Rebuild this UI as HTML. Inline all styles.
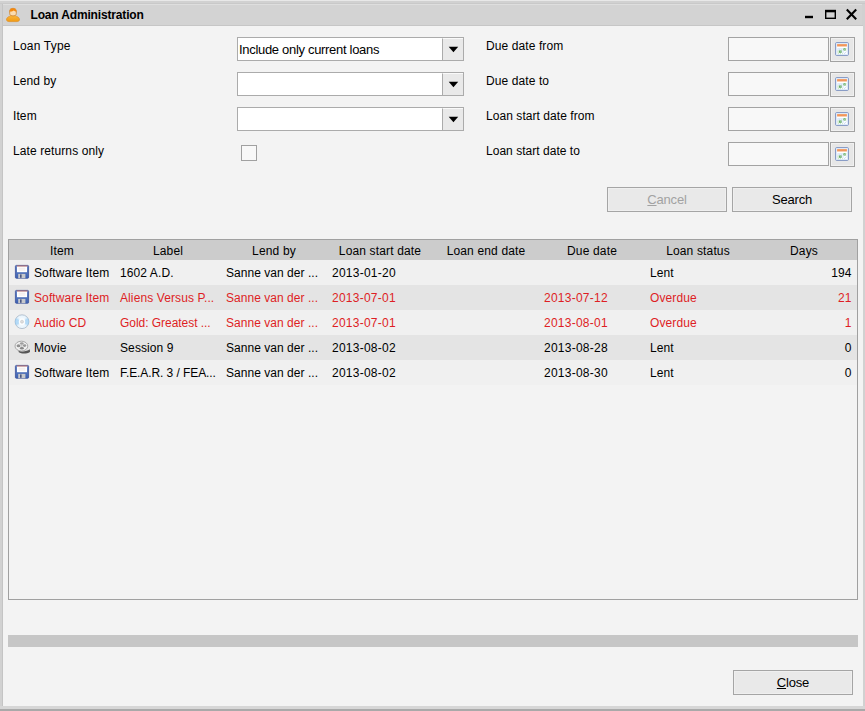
<!DOCTYPE html>
<html><head><meta charset="utf-8"><title>Loan Administration</title>
<style>
html,body{margin:0;padding:0;}
body{width:865px;height:711px;overflow:hidden;background:#d1d1d1;font-family:"Liberation Sans",Arial,sans-serif;font-size:12px;color:#000;position:relative;}
.abs{position:absolute;}
#topline{left:0;top:0;width:865px;height:1px;background:#e8e8e8;}
#topline2{left:0;top:3px;width:865px;height:1px;background:#c9c9c9;}
#botline{left:0;top:709px;width:865px;height:2px;background:#a9a9a9;}
#botline2{left:0;top:706px;width:865px;height:3px;background:#d6d6d6;}
#title{left:3px;top:4px;width:859px;height:21px;background:#d3d3d3;border-top:1px solid #dedede;box-sizing:border-box;}
#titleln{left:3px;top:25px;width:860px;height:1px;background:#c6c6c6;}
#ttext{left:30.5px;top:8px;font-weight:bold;font-size:12px;line-height:14px;white-space:nowrap;letter-spacing:-0.16px;}
#content{left:3px;top:26px;width:860px;height:680px;background:#f3f3f3;}
.lbl{position:absolute;white-space:nowrap;line-height:14px;letter-spacing:0.1px;}
.combo{position:absolute;left:237px;width:225px;height:22px;border:1px solid #ababab;background:#fff;}
.combo .txt{position:absolute;left:1px;top:4px;font-size:13px;line-height:15px;white-space:nowrap;letter-spacing:-0.31px;}
.combo .btn{position:absolute;right:0;top:0;width:20px;height:21px;border-left:1px solid #ababab;border-top:1px solid #fafafa;background:#e9e9e9;}
.combo .btn svg{position:absolute;left:0;top:-1px;}
.date{position:absolute;left:728px;width:99px;height:22px;border:1px solid #a3a3a3;background:#f8f8f8;}
.cal{position:absolute;left:830px;width:23px;height:23px;border:1px solid #a2a2a2;background:#e7e7e7;box-shadow:inset 0 0 0 1px #f1f1f1;}
.cal svg{position:absolute;left:3px;top:3px;}
.chk{position:absolute;left:241px;top:145px;width:14px;height:14px;border:1px solid #a0a0a0;background:#f8f8f8;}
.button{position:absolute;height:23px;border:1px solid #a5a5a5;background:#e9e9e9;text-align:center;line-height:24px;font-size:13px;letter-spacing:-0.2px;box-shadow:inset 0 0 0 1px #efefef;}
#tbl{left:8px;top:239px;width:848px;height:359px;border:1px solid #a0a0a0;background:#f3f3f3;}
#hdr{left:9px;top:240px;width:848px;height:20px;background:#cccccc;}
.h{position:absolute;top:4px;line-height:15px;font-size:12px;text-align:center;white-space:nowrap;letter-spacing:0.15px;}
.row{position:absolute;left:9px;width:848px;height:25px;}
.row.a{background:#f0f0f0;}
.row.b{background:#e4e4e4;}
.row.r{color:#de1e24;}
.c{position:absolute;top:6px;line-height:15px;white-space:nowrap;letter-spacing:0.1px;}
.c.d{letter-spacing:0.25px;}
.ic{position:absolute;left:5px;top:4px;width:16px;height:16px;}
#prog{left:8px;top:635px;width:850px;height:12px;background:#c6c6c6;}
</style></head><body>
<div class="abs" id="topline"></div><div class="abs" id="topline2"></div>
<div class="abs" id="botline2"></div><div class="abs" id="botline"></div>
<div class="abs" id="title"></div><div class="abs" id="titleln"></div>
<div class="abs" style="left:2px;top:4px;width:1px;height:702px;background:#c4c4c4"></div>
<div class="abs" id="content"></div>
<svg class="abs" style="left:5px;top:7px" width="16" height="16" viewBox="0 0 16 16">
 <defs><linearGradient id="ub" x1="0" y1="0" x2="0" y2="1"><stop offset="0" stop-color="#fbb940"/><stop offset="1" stop-color="#f19a12"/></linearGradient></defs>
 <path d="M1.6 13.1 C1.2 11.4 2.6 10 4.4 9.4 C5.4 9 5.8 8.6 6 8 L10 8 C10.2 8.6 10.6 9 11.6 9.4 C13.4 10 14.8 11.4 14.4 13.1 C14.2 14.1 13.2 14.5 12 14.6 L4 14.6 C2.8 14.5 1.8 14.1 1.6 13.1 Z" fill="url(#ub)" stroke="#e0922a" stroke-width="0.8"/>
 <path d="M4.7 3.6 C4.7 0.6 11.3 0.6 11.3 3.6 L11.3 6.6 C11.3 8 9.8 8.9 8 8.9 C6.2 8.9 4.7 8 4.7 6.6 Z" fill="#fbdcb0" stroke="#c8802c" stroke-width="0.8"/>
 <path d="M4.6 4.8 C4.2 0.2 11.8 0.2 11.4 4.8 C10.4 4.6 9.4 4.2 8.8 3.6 C7.8 4.4 6.2 4.8 4.6 4.8Z" fill="#f3880e"/>
</svg>
<span class="abs" id="ttext">Loan Administration</span>
<svg class="abs" style="left:800px;top:4px" width="62" height="21" viewBox="0 0 62 21">
 <rect x="5" y="11.8" width="8" height="2.4" fill="#000"/>
 <rect x="25.7" y="7" width="9.6" height="7.3" fill="none" stroke="#000" stroke-width="1.4"/>
 <rect x="25" y="5.8" width="11" height="2.5" fill="#000"/>
 <path d="M46.8 5.6 L56.2 15.2 M56.2 5.6 L46.8 15.2" stroke="#000" stroke-width="2.1"/>
</svg>

<span class="lbl" style="left:13px;top:39px;letter-spacing:0.21px">Loan Type</span>
<span class="lbl" style="left:13px;top:74px">Lend by</span>
<span class="lbl" style="left:13px;top:109px">Item</span>
<span class="lbl" style="left:13px;top:144px">Late returns only</span>

<div class="combo" style="top:37px"><span class="txt">Include only current loans</span><div class="btn"><svg width="20" height="22" viewBox="0 0 20 22"><path d="M5.7 8.8 L15.2 8.8 L10.45 14.2 Z" fill="#000"/></svg></div></div>
<div class="combo" style="top:72px"><div class="btn"><svg width="20" height="22" viewBox="0 0 20 22"><path d="M5.7 8.8 L15.2 8.8 L10.45 14.2 Z" fill="#000"/></svg></div></div>
<div class="combo" style="top:107px"><div class="btn"><svg width="20" height="22" viewBox="0 0 20 22"><path d="M5.7 8.8 L15.2 8.8 L10.45 14.2 Z" fill="#000"/></svg></div></div>
<div class="chk"></div>

<span class="lbl" style="left:486px;top:39px">Due date from</span>
<span class="lbl" style="left:486px;top:74px">Due date to</span>
<span class="lbl" style="left:486px;top:109px;letter-spacing:0.06px">Loan start date from</span>
<span class="lbl" style="left:486px;top:144px;letter-spacing:0.03px">Loan start date to</span>

<div class="date" style="top:37px"></div><div class="cal" style="top:37px"><svg width="16" height="16" viewBox="0 0 16 16"><use href="#calico"/></svg></div>
<div class="date" style="top:72px"></div><div class="cal" style="top:72px"><svg width="16" height="16" viewBox="0 0 16 16"><use href="#calico"/></svg></div>
<div class="date" style="top:107px"></div><div class="cal" style="top:107px"><svg width="16" height="16" viewBox="0 0 16 16"><use href="#calico"/></svg></div>
<div class="date" style="top:142px"></div><div class="cal" style="top:142px"><svg width="16" height="16" viewBox="0 0 16 16"><use href="#calico"/></svg></div>

<div class="button" style="left:607px;top:187px;width:118px;color:#a2a2a2"><u>C</u>ancel</div>
<div class="button" style="left:732px;top:187px;width:118px">Search</div>

<div class="abs" id="tbl"></div>
<div class="abs" id="hdr">
 <span class="h" style="left:0;width:106px">Item</span>
 <span class="h" style="left:106px;width:106px">Label</span>
 <span class="h" style="left:212px;width:106px">Lend by</span>
 <span class="h" style="left:318px;width:106px">Loan start date</span>
 <span class="h" style="left:424px;width:106px">Loan end date</span>
 <span class="h" style="left:530px;width:106px">Due date</span>
 <span class="h" style="left:636px;width:106px">Loan status</span>
 <span class="h" style="left:742px;width:106px">Days</span>
</div>

<div class="row a" style="top:260px"><svg class="ic" viewBox="0 0 16 16"><use href="#floppy"/></svg><span class="c" style="left:25px">Software Item</span><span class="c" style="left:111px">1602 A.D.</span><span class="c" style="left:217px;letter-spacing:0.04px">Sanne van der ...</span><span class="c d" style="left:323px">2013-01-20</span><span class="c" style="left:641px">Lent</span><span class="c" style="right:5.5px">194</span></div>
<div class="row b r" style="top:285px"><svg class="ic" viewBox="0 0 16 16"><use href="#floppy"/></svg><span class="c" style="left:25px">Software Item</span><span class="c" style="left:111px">Aliens Versus P...</span><span class="c" style="left:217px;letter-spacing:0.04px">Sanne van der ...</span><span class="c d" style="left:323px">2013-07-01</span><span class="c d" style="left:535px">2013-07-12</span><span class="c" style="left:641px">Overdue</span><span class="c" style="right:5.5px">21</span></div>
<div class="row a r" style="top:310px"><svg class="ic" viewBox="0 0 16 16"><use href="#cd"/></svg><span class="c" style="left:25px">Audio CD</span><span class="c" style="left:111px;letter-spacing:-0.04px">Gold: Greatest ...</span><span class="c" style="left:217px;letter-spacing:0.04px">Sanne van der ...</span><span class="c d" style="left:323px">2013-07-01</span><span class="c d" style="left:535px">2013-08-01</span><span class="c" style="left:641px">Overdue</span><span class="c" style="right:5.5px">1</span></div>
<div class="row b" style="top:335px"><svg class="ic" viewBox="0 0 16 16"><use href="#movie"/></svg><span class="c" style="left:25px">Movie</span><span class="c" style="left:111px">Session 9</span><span class="c" style="left:217px;letter-spacing:0.04px">Sanne van der ...</span><span class="c d" style="left:323px">2013-08-02</span><span class="c d" style="left:535px">2013-08-28</span><span class="c" style="left:641px">Lent</span><span class="c" style="right:5.5px">0</span></div>
<div class="row a" style="top:360px"><svg class="ic" viewBox="0 0 16 16"><use href="#floppy"/></svg><span class="c" style="left:25px">Software Item</span><span class="c" style="left:111px;letter-spacing:-0.08px">F.E.A.R. 3 / FEA...</span><span class="c" style="left:217px;letter-spacing:0.04px">Sanne van der ...</span><span class="c d" style="left:323px">2013-08-02</span><span class="c d" style="left:535px">2013-08-30</span><span class="c" style="left:641px">Lent</span><span class="c" style="right:5.5px">0</span></div>

<div class="abs" id="prog"></div>
<div class="button" style="left:733px;top:670px;width:118px"><u>C</u>lose</div>

<svg width="0" height="0" style="position:absolute">
 <defs>
  <linearGradient id="fb" x1="0" y1="0" x2="0" y2="1"><stop offset="0" stop-color="#6a88c8"/><stop offset="1" stop-color="#3c60b0"/></linearGradient>
  <radialGradient id="cdg" cx="0.5" cy="0.5" r="0.5"><stop offset="0" stop-color="#fff"/><stop offset="1" stop-color="#e4f2fc"/></radialGradient>
  <g id="calico">
   <rect x="1.5" y="1.5" width="13" height="13" rx="1.3" fill="#fdfeff" stroke="#6e86ba" stroke-width="0.8"/>
   <rect x="2.4" y="2.4" width="11.2" height="11.2" fill="none" stroke="#d6e4f8" stroke-width="0.8"/>
   <rect x="3.1" y="3.1" width="9.8" height="2.3" fill="#f2965a"/>
   <rect x="3.1" y="5.4" width="9.8" height="0.5" fill="#f8c8a4"/>
   <rect x="3.4" y="7.3" width="6.1" height="2.2" fill="#cfe3f6"/>
   <rect x="9.5" y="7.3" width="2.2" height="2.2" fill="#3f9a3c"/>
   <rect x="11.7" y="7.3" width="1" height="2.2" fill="#cfe6cc"/>
   <rect x="3.4" y="9.5" width="1.8" height="2.3" fill="#c2e2be"/>
   <rect x="5.2" y="9.5" width="2.5" height="2.3" fill="#3f9a3c"/>
   <rect x="7.7" y="9.5" width="2" height="2.3" fill="#d6e8f8"/>
   <path d="M3.8 12.7H4.8M5.9 12.7H6.9M8 12.7H8.8" stroke="#8ccc88" stroke-width="1"/>
   <path d="M4.3 6.2V13.2M6.4 6.2V13.2M8.5 6.2V13.2M10.6 6.2V10.4M12.5 6.2V10" stroke="#fff" stroke-width="0.8" stroke-dasharray="0.9 1.2"/>
   <path d="M10 12.9 L12.5 10.7" stroke="#b4c8e6" stroke-width="0.6"/>
  </g>
  <g id="floppy">
   <rect x="1.4" y="1.4" width="13.2" height="12.9" rx="1" fill="url(#fb)" stroke="#3b509a" stroke-width="0.8"/>
   <rect x="3" y="1.6" width="10.4" height="1.1" fill="#d4705a"/>
   <rect x="3" y="2.6" width="10" height="5.6" fill="#fff"/>
   <path d="M4.6 4.2H11.4M4.6 6H11.4" stroke="#e6d8d8" stroke-width="0.6"/>
   <rect x="4.2" y="9.9" width="7.2" height="4.4" fill="#c6c8cc"/>
   <rect x="6.2" y="10.4" width="1.3" height="3.4" fill="#2c3c70"/>
  </g>
  <g id="cd">
   <circle cx="8" cy="7.7" r="6.9" fill="url(#cdg)" stroke="#aab8c6" stroke-width="0.8"/>
   <path d="M8 7.7 L2.1 4.2 A6.9 6.9 0 0 0 2.1 11.2 Z" fill="#8ac6f2" opacity="0.7"/>
   <path d="M8 7.7 L13.9 4.2 A6.9 6.9 0 0 1 13.9 11.2 Z" fill="#8ac6f2" opacity="0.7"/>
   <path d="M8 7.7 L3.4 3.2 A6.9 6.9 0 0 0 3.4 12.2 Z" fill="#bfe0f8" opacity="0.5"/>
   <path d="M8 7.7 L12.6 3.2 A6.9 6.9 0 0 1 12.6 12.2 Z" fill="#bfe0f8" opacity="0.5"/>
   <circle cx="8" cy="7.7" r="3.2" fill="#fcfeff"/>
   <circle cx="8" cy="7.7" r="1.5" fill="#dedede" stroke="#c6c6c6" stroke-width="0.6"/>
  </g>
  <g id="movie" transform="translate(0,-0.7)">
   <path d="M4.4 12.2 C8 14.2 13 13 15.8 11 L16 13.6 C13 15.6 8 16 4.8 14 Z" fill="#555"/>
   <ellipse cx="7.4" cy="7.8" rx="6.4" ry="4.9" fill="#f0f0f0" stroke="#a0a0a0" stroke-width="0.9"/>
   <ellipse cx="4.5" cy="7.5" rx="1.9" ry="1.5" fill="#909090"/>
   <ellipse cx="7.8" cy="5.2" rx="1.9" ry="1.2" fill="#9c9c9c"/>
   <ellipse cx="10.6" cy="7.3" rx="1.7" ry="1.3" fill="#989898"/>
   <ellipse cx="7.9" cy="10" rx="2" ry="1.3" fill="#868686"/>
   <ellipse cx="7.6" cy="7.6" rx="1.1" ry="0.9" fill="#c4c4c4"/>
  </g>
 </defs>
</svg>
</body></html>
